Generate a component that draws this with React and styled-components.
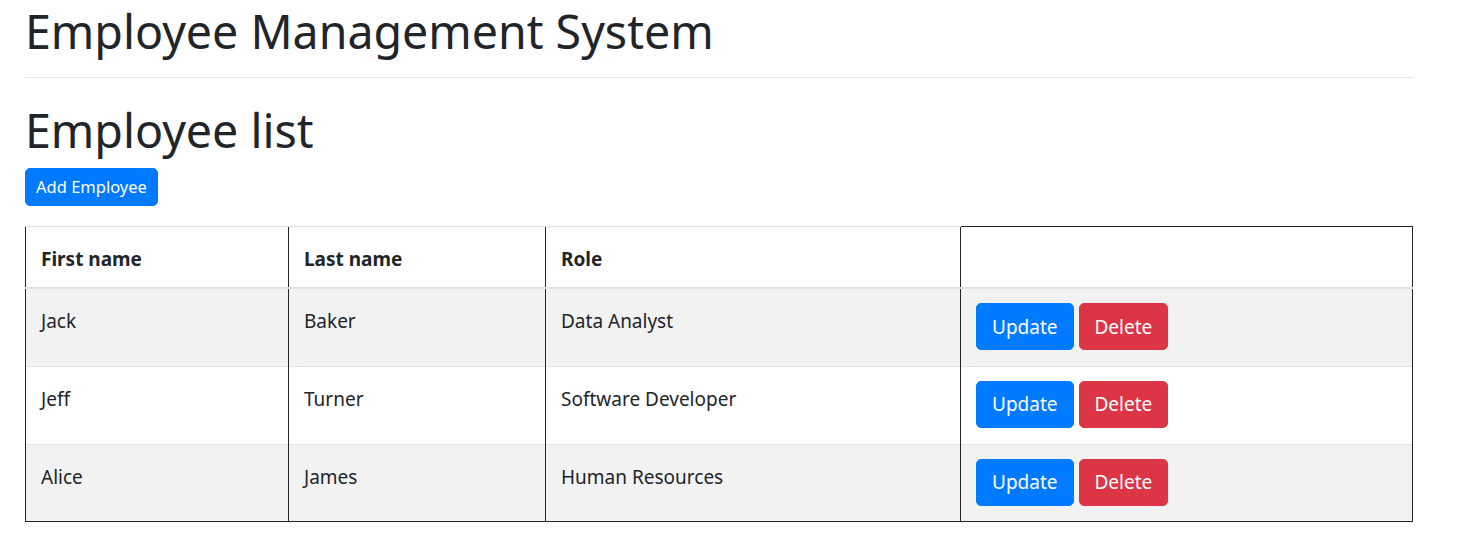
import React from 'react';
import styled, { createGlobalStyle } from 'styled-components';

const GlobalStyle = createGlobalStyle`
  body {
    margin: 0;
    background: #fff;
    color: #212529;
    font-family: "Noto Sans", "Open Sans", sans-serif;
  }
`

const Page = styled.div`
  padding-left: 25px;
`

const Content = styled.div`
  width: 1388px;
`

const Title = styled.h1`
  margin: 0;
  font-size: 46.5px;
  font-weight: 400;
  line-height: 62px;
`

const Rule = styled.hr`
  border: 0;
  border-top: 1px solid rgba(0, 0, 0, 0.1);
  margin: 15px 0 21px;
`

const Toolbar = styled.div`
  margin-top: 7px;
`

const Button = styled.button`
  display: inline-block;
  border: 1px solid ${props => props.color};
  background: ${props => props.color};
  color: #fff;
  font-family: inherit;
  font-size: ${props => props.small ? '16.5px' : '19px'};
  line-height: ${props => props.small ? '26px' : '30px'};
  padding: ${props => props.small ? '5px 10px' : '7.5px 15px'};
  border-radius: 5px;
  cursor: pointer;
`

const Table = styled.table`
  width: 100%;
  margin-top: 20px;
  border-collapse: collapse;
  font-size: 19px;
  line-height: 30px;
`

const Th = styled.th`
  text-align: left;
  font-weight: 700;
  padding: 17px 15px 13px;
  vertical-align: bottom;
  border-top: 1px solid ${props => props.dark ? '#212529' : '#dee2e6'};
  border-bottom: 2px solid #dee2e6;
  border-left: 1px solid #212529;
  border-right: ${props => props.dark ? '1px solid #212529' : 'none'};
`

const Row = styled.tr`
  background: ${props => props.striped ? '#f2f2f2' : '#fff'};
  &:last-child td {
    border-bottom: 1px solid #212529;
  }
`

const Td = styled.td`
  padding: ${props => props.last ? '14px 15px 15.75px' : '17px 15px 12px'};
  vertical-align: top;
  border-top: 1px solid #dee2e6;
  border-left: 1px solid #212529;
  border-right: ${props => props.last ? '1px solid #212529' : 'none'};
`

const Actions = styled.div`
  display: flex;
  gap: 5px;
`

const employees = [
  { first: 'Jack', last: 'Baker', role: 'Data Analyst' },
  { first: 'Jeff', last: 'Turner', role: 'Software Developer' },
  { first: 'Alice', last: 'James', role: 'Human Resources' },
]

const App = () => {
  return (
    <Page>
      <GlobalStyle />
      <Content>
        <Title>Employee Management System</Title>
        <Rule />
        <Title>Employee list</Title>
        <Toolbar>
          <Button small color="#007bff">Add Employee</Button>
        </Toolbar>
        <Table>
          <colgroup>
            <col style={{ width: 263 }} />
            <col style={{ width: 257 }} />
            <col style={{ width: 415 }} />
            <col />
          </colgroup>
          <thead>
            <tr>
              <Th>First name</Th>
              <Th>Last name</Th>
              <Th>Role</Th>
              <Th dark></Th>
            </tr>
          </thead>
          <tbody>
            {employees.map((e, i) => (
              <Row key={e.first} striped={i % 2 === 0}>
                <Td>{e.first}</Td>
                <Td>{e.last}</Td>
                <Td>{e.role}</Td>
                <Td last>
                  <Actions>
                    <Button color="#007bff">Update</Button>
                    <Button color="#dc3545">Delete</Button>
                  </Actions>
                </Td>
              </Row>
            ))}
          </tbody>
        </Table>
      </Content>
    </Page>
  );
}

export default App;
